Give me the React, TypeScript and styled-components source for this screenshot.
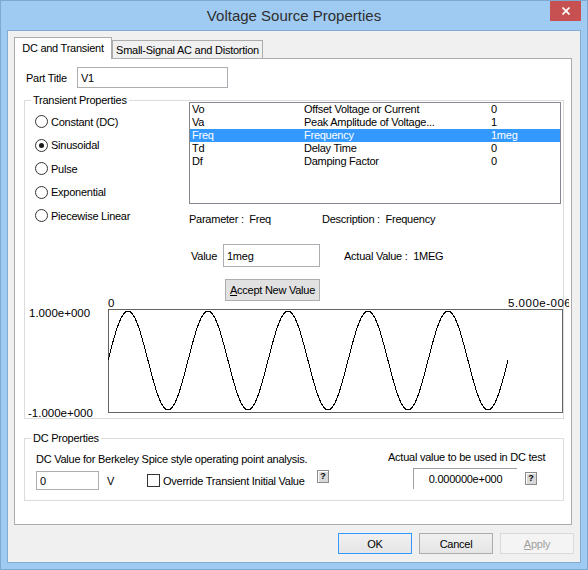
import React from 'react';
import styled, { createGlobalStyle } from 'styled-components';

const UI_FONT = "'Liberation Sans', Arial, sans-serif";

const GlobalStyle = createGlobalStyle`
  html, body {
    margin: 0;
    padding: 0;
    background: #ffffff;
  }
  body {
    font-family: ${UI_FONT};
    font-size: 11px;
    letter-spacing: -0.25px;
    color: #000;
  }
`;

const waveforms = ['Constant (DC)', 'Sinusoidal', 'Pulse', 'Exponential', 'Piecewise Linear'];

const params = [
  { name: 'Vo', desc: 'Offset Voltage or Current', value: '0' },
  { name: 'Va', desc: 'Peak Amplitude of Voltage...', value: '1' },
  { name: 'Freq', desc: 'Frequency', value: '1meg', selected: true },
  { name: 'Td', desc: 'Delay Time', value: '0' },
  { name: 'Df', desc: 'Damping Factor', value: '0' },
];

// 5 cycles of the sine, 80px a period, drawn into the chart svg
const sinePath = (() => {
  const pts: string[] = [];
  for (let i = 0; i <= 400; i++) {
    const y = 65.5 - 49.5 * Math.sin((2 * Math.PI * i) / 80);
    pts.push(`${i === 0 ? 'M' : 'L'}${83 + i} ${y.toFixed(2)}`);
  }
  return pts.join(' ');
})();

const App = () => {
  return (
    <>
      <GlobalStyle />
      <S.Window>
        <S.TitleBar>
          <span />
          <S.Title>Voltage Source Properties</S.Title>
          <S.CloseBtn type="button" aria-label="Close">
            <svg width="8" height="8" viewBox="0 0 8 8">
              <path d="M0.5 0.5 L7.5 7.5 M7.5 0.5 L0.5 7.5" stroke="#fff" strokeWidth="1.7" />
            </svg>
          </S.CloseBtn>
        </S.TitleBar>

        <S.Client>
          <S.TabStrip>
            <S.Tab $active $width={98}>DC and Transient</S.Tab>
            <S.Tab $width={151}>Small-Signal AC and Distortion</S.Tab>
          </S.TabStrip>

          <S.Pane>
            <S.PartRow>
              <S.PartLabel>Part Title</S.PartLabel>
              <S.TextField $width={151} $height={21} defaultValue="V1" />
            </S.PartRow>

            <S.GroupBox $mt={12}>
              <S.GroupTitle>Transient Properties</S.GroupTitle>
              <S.TransientBody>
                <S.RadioList>
                  {waveforms.map((w) => (
                    <S.RadioRow key={w}>
                      <S.Radio $checked={w === 'Sinusoidal'} />
                      {w}
                    </S.RadioRow>
                  ))}
                </S.RadioList>

                <S.ParamPanel>
                  <S.ListBox>
                    {params.map((p) => (
                      <S.ListRow key={p.name} $selected={p.selected}>
                        <span>{p.name}</span>
                        <span>{p.desc}</span>
                        <span>{p.value}</span>
                      </S.ListRow>
                    ))}
                  </S.ListBox>
                  <S.InfoRow>
                    <S.InfoCell $width={133}>Parameter :&nbsp; Freq</S.InfoCell>
                    <S.InfoCell>Description :&nbsp; Frequency</S.InfoCell>
                  </S.InfoRow>
                  <S.ValueRow>
                    <S.ValueLabel>Value</S.ValueLabel>
                    <S.TextField $width={97} $height={23} defaultValue="1meg" />
                    <S.ActualValue>Actual Value :&nbsp; 1MEG</S.ActualValue>
                  </S.ValueRow>
                  <S.AcceptBtn type="button">
                    <u>A</u>ccept New Value
                  </S.AcceptBtn>
                </S.ParamPanel>
              </S.TransientBody>

              <S.Chart width="544" height="123" viewBox="0 0 544 123">
                <text x="83" y="11.5">0</text>
                <text x="483" y="12" letterSpacing="0.5">5.000e-006</text>
                <text x="4" y="22">1.000e+000</text>
                <text x="3" y="121.5">-1.000e+000</text>
                <rect x="83.5" y="14.5" width="454" height="103" fill="none" stroke="#646464" />
                <path d={sinePath} fill="none" stroke="#000" strokeWidth="1" />
              </S.Chart>
            </S.GroupBox>

            <S.GroupBox $mt={19}>
              <S.GroupTitle>DC Properties</S.GroupTitle>
              <S.DCBody>
                <S.DCLeft>
                  <S.Line>DC Value for Berkeley Spice style operating point analysis.</S.Line>
                  <S.DCRow>
                    <S.TextField $width={63} $height={19} defaultValue="0" />
                    <S.Unit>V</S.Unit>
                    <S.CheckBox />
                    <S.CheckLabel>Override Transient Initial Value</S.CheckLabel>
                    <S.HelpBtn type="button" $mt={-1}>?</S.HelpBtn>
                  </S.DCRow>
                </S.DCLeft>
                <S.DCRight>
                  <S.Line>Actual value to be used in DC test</S.Line>
                  <S.ResultRow>
                    <S.StaticValue>0.000000e+000</S.StaticValue>
                    <S.HelpBtn type="button" $mt={4}>?</S.HelpBtn>
                  </S.ResultRow>
                </S.DCRight>
              </S.DCBody>
            </S.GroupBox>
          </S.Pane>

          <S.ButtonRow>
            <S.DialogBtn type="button" $default>OK</S.DialogBtn>
            <S.DialogBtn type="button">Cancel</S.DialogBtn>
            <S.DialogBtn type="button" disabled>
              <u>A</u>pply
            </S.DialogBtn>
          </S.ButtonRow>
        </S.Client>
      </S.Window>
    </>
  );
};

const S = {
  Window: styled.div`
    display: flex;
    flex-direction: column;
    box-sizing: border-box;

    width: 588px;
    height: 570px;
    padding: 0 6px 6px;

    background: #9fcbf3;
    border: 1px solid #7ea8d0;
  `,

  TitleBar: styled.div`
    display: grid;
    grid-template-columns: 1fr auto 1fr;
    align-items: center;

    height: 29px;
  `,

  Title: styled.span`
    color: #2e2e2e;
    font-size: 15px;
    letter-spacing: 0;
    line-height: 20px;
  `,

  CloseBtn: styled.button`
    display: flex;
    justify-content: center;
    align-items: center;
    justify-self: end;
    align-self: start;

    width: 31px;
    height: 20px;
    padding: 0;

    background: #c75050;
    border: none;
  `,

  Client: styled.div`
    display: flex;
    flex: 1;
    flex-direction: column;
    padding: 6px 6px 8px;

    background: #f0f0f0;
    border: 1px solid #83aad0;
  `,

  TabStrip: styled.div`
    display: flex;
    align-items: flex-end;

    height: 21px;
  `,

  Tab: styled.div<{ $active?: boolean; $width: number }>`
    position: relative;
    z-index: ${({ $active }) => ($active ? 1 : 0)};
    box-sizing: border-box;

    width: ${({ $width }) => $width}px;
    height: ${({ $active }) => ($active ? 22 : 18)}px;
    margin-bottom: ${({ $active }) => ($active ? -1 : 0)}px;
    padding-top: ${({ $active }) => ($active ? 3 : 2)}px;

    background: ${({ $active }) => ($active ? '#ffffff' : '#f0f0f0')};
    border: 1px solid #acacac;
    border-bottom: none;

    line-height: 14px;
    text-align: center;
    white-space: nowrap;
  `,

  Pane: styled.div`
    box-sizing: border-box;

    height: 467px;
    margin-right: 2px;
    padding: 8px 7px 0 9px;

    background: #ffffff;
    border: 1px solid #acacac;
  `,

  PartRow: styled.div`
    display: flex;
    align-items: center;

    padding-left: 2px;
  `,

  PartLabel: styled.span`
    width: 51px;
  `,

  TextField: styled.input<{ $width: number; $height: number }>`
    box-sizing: border-box;

    width: ${({ $width }) => $width}px;
    height: ${({ $height }) => $height}px;
    margin: 0;
    padding: 0 3px;

    background: #ffffff;
    border: 1px solid #abadb3;
    outline: none;

    color: #000;
    font-family: ${UI_FONT};
    font-size: 11px;
    letter-spacing: -0.25px;
  `,

  GroupBox: styled.div<{ $mt: number }>`
    position: relative;

    margin-top: ${({ $mt }) => $mt}px;

    border: 1px solid #dcdcdc;
  `,

  GroupTitle: styled.span`
    position: absolute;
    top: -8px;
    left: 6px;

    padding: 0 2px;

    background: #ffffff;
    line-height: 14px;
  `,

  TransientBody: styled.div`
    display: grid;
    grid-template-columns: 164px 1fr;
  `,

  RadioList: styled.div`
    display: flex;
    flex-direction: column;

    padding: 9px 0 0 10px;
  `,

  RadioRow: styled.label`
    display: flex;
    align-items: center;
    gap: 3px;

    height: 23.5px;
  `,

  Radio: styled.span<{ $checked?: boolean }>`
    display: flex;
    justify-content: center;
    align-items: center;
    box-sizing: border-box;

    width: 13px;
    height: 13px;

    background: #ffffff;
    border: 1px solid #333333;
    border-radius: 50%;

    &::after {
      content: '';
      display: ${({ $checked }) => ($checked ? 'block' : 'none')};

      width: 5px;
      height: 5px;

      background: #1a1a1a;
      border-radius: 50%;
    }
  `,

  ParamPanel: styled.div`
    display: flex;
    flex-direction: column;
    align-items: flex-start;
  `,

  ListBox: styled.div`
    box-sizing: border-box;
    align-self: stretch;

    height: 102px;
    margin: 1px 2px 0 0;

    background: #ffffff;
    border: 1px solid #828790;
  `,

  ListRow: styled.div<{ $selected?: boolean }>`
    display: grid;
    grid-template-columns: 112px 187px 1fr;

    height: 13px;
    padding-left: 2px;

    background: ${({ $selected }) => ($selected ? '#3399ff' : 'transparent')};
    color: ${({ $selected }) => ($selected ? '#ffffff' : '#000000')};

    line-height: 13px;
    white-space: nowrap;
  `,

  InfoRow: styled.div`
    display: flex;

    margin-top: 8px;
    line-height: 14px;
  `,

  InfoCell: styled.span<{ $width?: number }>`
    width: ${({ $width }) => ($width ? `${$width}px` : 'auto')};
    white-space: nowrap;
  `,

  ValueRow: styled.div`
    display: flex;
    align-items: center;

    margin-top: 18px;
  `,

  ValueLabel: styled.span`
    width: 32px;
    margin-left: 2px;
  `,

  ActualValue: styled.span`
    margin-left: 24px;
  `,

  AcceptBtn: styled.button`
    box-sizing: border-box;

    width: 95px;
    height: 22px;
    margin: 12px 0 0 36px;
    padding: 0;

    background: #e1e1e1;
    border: 1px solid #adadad;

    color: #000;
    font-family: ${UI_FONT};
    font-size: 11px;
    letter-spacing: -0.25px;

    & > u {
      text-decoration-thickness: 1px;
    }
  `,

  Chart: styled.svg`
    display: block;

    margin-top: -6px;
    overflow: hidden;

    font-family: ${UI_FONT};
    font-size: 11.5px;
    letter-spacing: 0;

    & path {
      shape-rendering: crispEdges;
    }
  `,

  DCBody: styled.div`
    display: flex;

    padding: 13px 0 10px 11px;
  `,

  DCLeft: styled.div`
    display: flex;
    flex-direction: column;
  `,

  Line: styled.div`
    line-height: 14px;
    white-space: nowrap;
  `,

  DCRow: styled.div`
    display: flex;
    align-items: center;

    height: 19px;
    margin-top: 5px;
  `,

  Unit: styled.span`
    width: 40px;
    margin-left: 8px;
  `,

  CheckBox: styled.span`
    box-sizing: border-box;

    width: 13px;
    height: 13px;

    background: #ffffff;
    border: 1px solid #333333;
  `,

  CheckLabel: styled.span`
    width: 154px;
    margin-left: 3px;
    white-space: nowrap;
  `,

  HelpBtn: styled.button<{ $mt: number }>`
    display: flex;
    justify-content: center;
    align-items: center;
    align-self: flex-start;
    box-sizing: border-box;

    width: 12px;
    height: 13px;
    margin-top: ${({ $mt }) => $mt}px;
    padding: 0;

    background: #d8d8d8;
    border: 1px solid #8a8a8a;
    box-shadow: inset 1px 1px #ffffff;

    color: #000;
    font-family: ${UI_FONT};
    font-size: 9px;
    font-weight: bold;
    line-height: 1;
  `,

  DCRight: styled.div`
    display: flex;
    flex-direction: column;

    width: 175px;
    margin: -2px 0 0 auto;
  `,

  ResultRow: styled.div`
    display: flex;
    gap: 8px;

    margin: 4px 0 0 25px;
  `,

  StaticValue: styled.div`
    box-sizing: border-box;

    width: 104px;
    height: 21px;

    border-top: 1px solid #a0a0a0;
    border-left: 1px solid #a0a0a0;

    line-height: 20px;
    text-align: center;
  `,

  ButtonRow: styled.div`
    display: flex;
    justify-content: flex-end;
    gap: 7px;

    margin-top: 8px;
  `,

  DialogBtn: styled.button<{ $default?: boolean }>`
    box-sizing: border-box;

    width: 74px;
    height: 21px;
    padding: 0;

    background: linear-gradient(#f0f0f0, #e5e5e5);
    border: 1px solid ${({ $default }) => ($default ? '#3399ff' : '#acacac')};

    color: #000;
    font-family: ${UI_FONT};
    font-size: 11px;
    letter-spacing: -0.25px;

    &:disabled {
      background: #f4f4f4;
      border-color: #d9d9d9;
      color: #a0a0a0;
    }
  `,
};

export default App;
